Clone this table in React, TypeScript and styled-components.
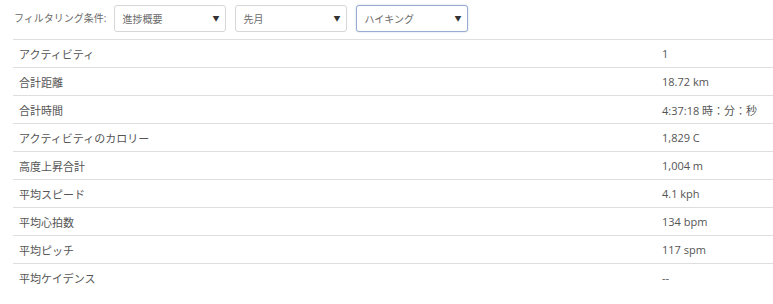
import React from "react";
import styled, { createGlobalStyle } from "styled-components";

const Global = createGlobalStyle`
  html, body { margin: 0; padding: 0; background: #fff; }
  body { font-family: "Open Sans", "Noto Sans CJK JP", sans-serif; color: #555; }
`;

const Page = styled.div`
  width: 773px;
  height: 304px;
  overflow: hidden;
`;

const FilterBar = styled.div`
  display: flex;
  align-items: center;
  height: 27px;
  padding: 5px 0 0 14px;
`;

const FilterLabel = styled.span`
  font-size: 10px;
  color: #6a6a6a;
  margin-right: 8px;
  line-height: 1;
  margin-top: -2px;
`;

const Select = styled.div<{ $active?: boolean }>`
  box-sizing: border-box;
  width: 112px;
  height: 27px;
  margin-right: 9px;
  display: flex;
  align-items: center;
  justify-content: space-between;
  padding: 0 6px 0 7px;
  border: 1px solid ${(p) => (p.$active ? "#97abd0" : "#d6d6d6")};
  border-radius: 3px;
  box-shadow: ${(p) => (p.$active ? "0 0 2px rgba(120,150,200,0.45)" : "none")};
  font-size: 10px;
  color: #6a6a6a;
  background: #fff;
`;

const Arrow = styled.span`
  font-size: 7px;
  color: #333;
  line-height: 1;
`;

const Table = styled.div`
  margin: 7px 0 0 13px;
  width: 760px;
`;

const Row = styled.div`
  display: grid;
  grid-template-columns: 643px 1fr;
  border-top: 1px solid #dedede;
  height: 27px;
  align-items: center;
  font-size: 11px;
  color: #555;
`;

const Cell = styled.div`
  padding: 0 6px;
  white-space: nowrap;
`;

const rows: [string, string][] = [
  ["アクティビティ", "1"],
  ["合計距離", "18.72 km"],
  ["合計時間", "4:37:18 時：分：秒"],
  ["アクティビティのカロリー", "1,829 C"],
  ["高度上昇合計", "1,004 m"],
  ["平均スピード", "4.1 kph"],
  ["平均心拍数", "134 bpm"],
  ["平均ピッチ", "117 spm"],
  ["平均ケイデンス", "--"],
];

export default function App() {
  return (
    <Page>
      <Global />
      <FilterBar>
        <FilterLabel>フィルタリング条件:</FilterLabel>
        <Select>
          <span>進捗概要</span>
          <Arrow>▼</Arrow>
        </Select>
        <Select>
          <span>先月</span>
          <Arrow>▼</Arrow>
        </Select>
        <Select $active>
          <span>ハイキング</span>
          <Arrow>▼</Arrow>
        </Select>
      </FilterBar>
      <Table>
        {rows.map(([k, v]) => (
          <Row key={k}>
            <Cell>{k}</Cell>
            <Cell>{v}</Cell>
          </Row>
        ))}
      </Table>
    </Page>
  );
}
